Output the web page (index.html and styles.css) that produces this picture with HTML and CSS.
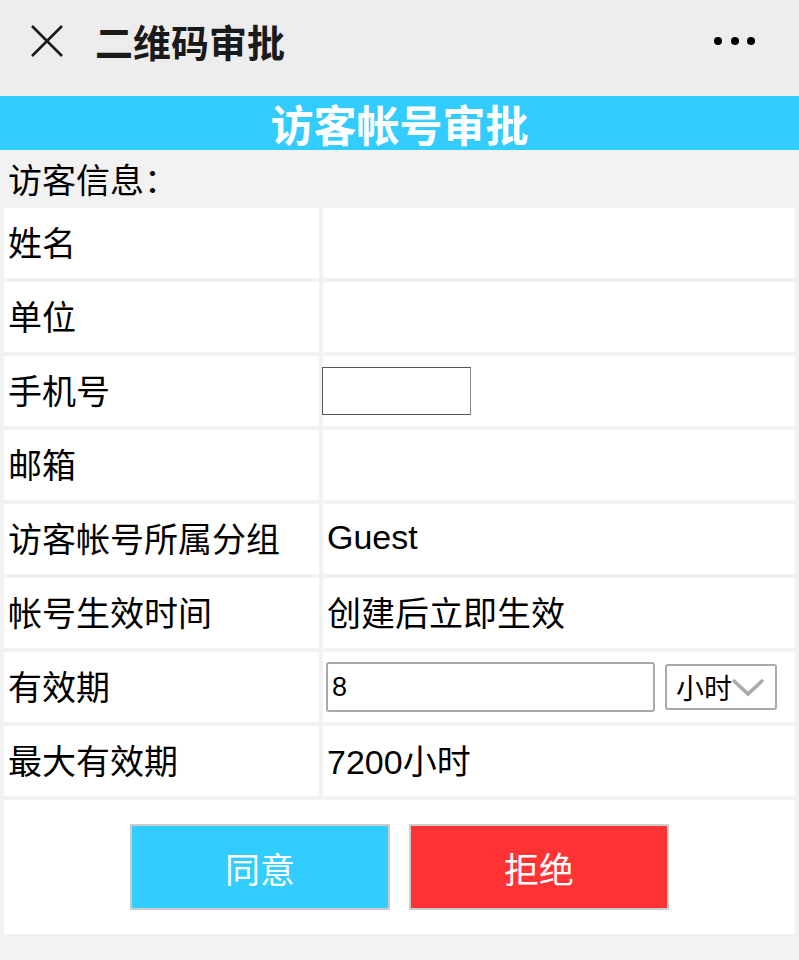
FILE: index.html
```html
<!DOCTYPE html>
<html lang="zh-CN">
  <head>
    <meta charset="UTF-8" />
    <meta name="viewport" content="width=device-width, initial-scale=1.0" />
    <title>二维码审批</title>
    <link rel="stylesheet" href="styles.css">
  </head>
  <body>
    <div class="topbar">
      <svg class="close" width="34" height="34" viewBox="0 0 34 34">
        <path d="M2 2 L32 32 M32 2 L2 32" stroke="#1a1a1a" stroke-width="2.6" fill="none" />
      </svg>
      <div class="topbar-title">二维码审批</div>
      <div class="more"><span></span><span></span><span></span></div>
    </div>

    <h1 class="banner">访客帐号审批</h1>
    <div class="section">访客信息：</div>

    <table class="info">
      <tr>
        <td class="label">姓名</td>
        <td></td>
      </tr>
      <tr>
        <td class="label">单位</td>
        <td></td>
      </tr>
      <tr>
        <td class="label">手机号</td>
        <td class="flush"><input type="text" class="phone" /></td>
      </tr>
      <tr>
        <td class="label">邮箱</td>
        <td></td>
      </tr>
      <tr>
        <td class="label">访客帐号所属分组</td>
        <td>Guest</td>
      </tr>
      <tr>
        <td class="label">帐号生效时间</td>
        <td>创建后立即生效</td>
      </tr>
      <tr>
        <td class="label">有效期</td>
        <td>
          <div class="period">
            <input type="text" class="hours" value="8" />
            <div class="unit">
              <span>小时</span>
              <svg width="34" height="20" viewBox="0 0 34 20">
                <path d="M2 3 L17 17 L32 3" stroke="#aaa" stroke-width="3.6" fill="none" />
              </svg>
            </div>
          </div>
        </td>
      </tr>
      <tr>
        <td class="label">最大有效期</td>
        <td>7200小时</td>
      </tr>
      <tr>
        <td colspan="2" class="actions">
          <div class="buttons">
            <button class="btn agree">同意</button>
            <button class="btn reject">拒绝</button>
          </div>
        </td>
      </tr>
    </table>
  </body>
</html>
```

FILE: styles.css
```css
body {
  margin: 0;
  background: #f2f2f2;
  font-family: "Liberation Sans", "Noto Sans CJK SC", sans-serif;
  color: #000;
}
.topbar {
  height: 96px;
  background: #ededed;
  display: flex;
  align-items: center;
  padding: 0 0 15px 30px;
  box-sizing: border-box;
}
.close {
  display: block;
}
.topbar-title {
  margin-left: 31px;
  font-family: "Noto Sans CJK SC", sans-serif;
  font-weight: bold;
  font-size: 38px;
  color: #1a1a1a;
  flex: 1;
}
.more {
  display: flex;
  gap: 8.5px;
  margin-right: 44px;
}
.more span {
  width: 8px;
  height: 8px;
  border-radius: 50%;
  background: #000;
}
.banner {
  margin: 0;
  height: 54px;
  line-height: 54px;
  background: #33ccff;
  color: #fff;
  text-align: center;
  font-family: "Noto Sans CJK SC", sans-serif;
  font-size: 43px;
  font-weight: bold;
}
.section {
  height: 54px;
  line-height: 62px;
  padding-left: 8px;
  font-size: 34px;
}
.info {
  width: 799px;
  border-spacing: 4px;
  table-layout: fixed;
}
.info td {
  background: #fff;
  height: 67px;
  padding: 0 4px 3px;
  font-size: 34px;
  vertical-align: middle;
  white-space: nowrap;
}
.info td.label {
  width: 307px;
}
.info td.flush {
  padding-left: 0;
}
.phone {
  width: 149px;
  height: 48px;
  box-sizing: border-box;
  border: 1px solid #555;
  border-right-color: #888;
  margin: 3px 0 0 -1px;
  padding: 0;
  display: block;
}
.period {
  display: flex;
  align-items: center;
  margin-top: 3px;
}
.hours {
  width: 329px;
  height: 50px;
  box-sizing: border-box;
  border: 2px solid #aaa;
  border-radius: 3px;
  margin: 0 0 0 -1px;
  padding: 0 0 0 4px;
  font-size: 27px;
  font-family: "Liberation Sans", sans-serif;
  color: #000;
}
.unit {
  width: 112px;
  height: 46px;
  box-sizing: border-box;
  margin-left: 10px;
  border: 2px solid #aaa;
  border-radius: 3px;
  display: flex;
  align-items: center;
  padding-left: 9px;
  font-size: 28px;
}
.unit svg {
  display: block;
  margin-left: -1px;
}
.info td.actions {
  height: 134px;
  padding: 0;
}
.buttons {
  display: flex;
  justify-content: center;
  gap: 19px;
}
.btn {
  width: 260px;
  height: 86px;
  margin: 0;
  border: 2px solid #ccc;
  color: #fff;
  font-size: 35px;
  font-family: "Noto Sans CJK SC", sans-serif;
}
.agree {
  background: #33ccff;
}
.reject {
  background: #ff3333;
}
```
